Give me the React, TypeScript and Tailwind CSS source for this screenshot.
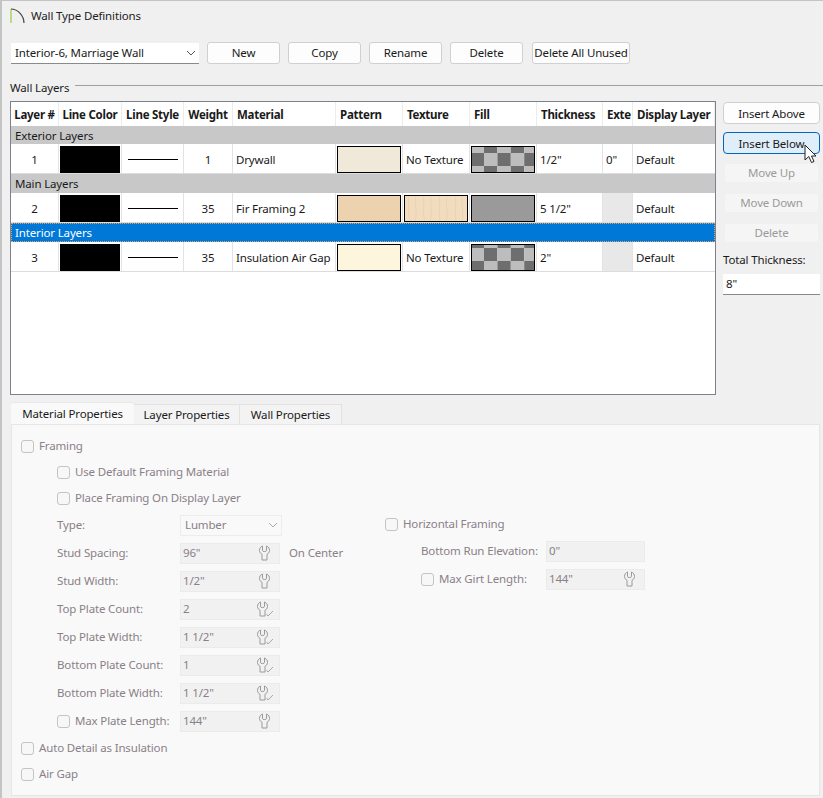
import type { ReactNode } from 'react';

const columns = [
  { name: 'Layer #', cls: 'justify-center' },
  { name: 'Line Color', cls: 'justify-center' },
  { name: 'Line Style', cls: 'justify-center' },
  { name: 'Weight', cls: 'justify-center' },
  { name: 'Material', cls: 'pl-1' },
  { name: 'Pattern', cls: 'pl-1' },
  { name: 'Texture', cls: 'pl-1' },
  { name: 'Fill', cls: 'pl-1' },
  { name: 'Thickness', cls: 'pl-1' },
  { name: 'Exte', cls: 'pl-1' },
  { name: 'Display Layer', cls: 'pl-1' },
];

const gridCols = 'grid grid-cols-[48px_63px_62px_49px_103px_67px_67px_67px_66px_30px_82px]';

function Checker({ top = -7, flip = false }: { top?: number; flip?: boolean }) {
  const cells = [];
  for (let row = 0; row < 4; row++) {
    for (let col = 0; col < 5; col++) {
      const light = (row + col) % 2 === (flip ? 1 : 0);
      cells.push(
        <rect key={`${row}-${col}`} x={col * 13.4 - 1.4} y={row * 13 + top} width={13.4} height={13} fill={light ? '#bdbdbd' : '#6e6e6e'} />,
      );
    }
  }
  return (
    <svg width="62" height="25" className="block">
      {cells}
    </svg>
  );
}

function WoodTexture() {
  return (
    <svg width="62" height="25" className="block">
      <rect width="62" height="25" fill="#f2dcc0" />
      <path d="M3 0C5 8 2 16 5 25M11 0C9 9 13 17 10 25M18 0C20 7 17 18 20 25M26 0C25 8 28 16 25 25M34 0C36 9 33 15 35 25M42 0C40 8 44 18 41 25M50 0C52 7 49 17 51 25M57 0C56 9 59 16 57 25" stroke="#ecd2b0" strokeWidth="1" fill="none" />
    </svg>
  );
}

function Swatch({ color, children }: { color?: string; children?: ReactNode }) {
  return (
    <div
      className="m-auto h-[27px] w-[64px] overflow-hidden border border-black"
      style={color ? { backgroundColor: color } : undefined}
    >
      {children}
    </div>
  );
}

function Cell({ children, cls = '' }: { children?: ReactNode; cls?: string }) {
  return <div className={`flex h-[29px] items-center border-r border-[#e3e3e3] pt-[2px] whitespace-nowrap ${cls}`}>{children}</div>;
}

function LayerRow(props: {
  num: string;
  weight: string;
  material: string;
  pattern: string;
  texture: ReactNode;
  fill: ReactNode;
  thickness: string;
  exterior?: string;
}) {
  return (
    <div className={`${gridCols} border-b border-[#dcdcdc] bg-white`}>
      <Cell cls="justify-center">{props.num}</Cell>
      <Cell>
        <div className="m-auto h-[27px] w-[60px] bg-black" />
      </Cell>
      <Cell cls="justify-center">
        <div className="h-px w-[50px] bg-black" />
      </Cell>
      <Cell cls="justify-center">{props.weight}</Cell>
      <Cell cls="pl-[3px]">{props.material}</Cell>
      <Cell>
        <Swatch color={props.pattern} />
      </Cell>
      <Cell>{props.texture}</Cell>
      <Cell>{props.fill}</Cell>
      <Cell cls="pl-[3px]">{props.thickness}</Cell>
      <Cell cls={props.exterior ? 'pl-[3px]' : 'bg-[#e8e8e8]'}>{props.exterior}</Cell>
      <div className="flex h-[29px] items-center pt-[2px] pl-[3px]">Default</div>
    </div>
  );
}

function GroupRow({ label, selected, short }: { label: string; selected?: boolean; short?: boolean }) {
  if (selected) {
    return (
      <div className="h-[19px] border border-dotted border-[#e8a060] bg-[#0078d7] pl-[3px] leading-[17px] text-white">
        {label}
      </div>
    );
  }
  return <div className={`bg-[#c8c8c8] pt-px pl-1 ${short ? 'h-[18px] leading-[17px]' : 'h-[19px] leading-[18px]'}`}>{label}</div>;
}

function TopButton({ label, width }: { label: string; width: string }) {
  return (
    <button className={`h-[22px] rounded-[3px] border border-[#d0d0d0] bg-[#fdfdfd] whitespace-nowrap ${width}`}>
      {label}
    </button>
  );
}

function SideButton({ label, state }: { label: string; state?: 'hover' | 'off' }) {
  if (state === 'off') {
    return (
      <button className="mx-px h-5 rounded-[3px] border border-[#f0f0f0] bg-[#f5f5f5] text-[#9a9a9a]">{label}</button>
    );
  }
  const look = state === 'hover' ? 'border-[#0067c0] bg-[#e0eef9]' : 'border-[#d0d0d0] bg-[#fdfdfd]';
  return <button className={`h-[22px] rounded-[4px] border pt-[2px] ${look}`}>{label}</button>;
}

function Check() {
  return <span className="inline-block size-[13px] shrink-0 rounded-[3px] border border-[#c4c4c4] bg-[#f7f7f7]" />;
}

function CheckLabel({ label, cls = '' }: { label: string; cls?: string }) {
  return (
    <div className={`flex h-[26px] items-center gap-[5px] ${cls}`}>
      <Check />
      <span>{label}</span>
    </div>
  );
}

function Wrench({ ticked }: { ticked?: boolean }) {
  return (
    <svg width="19" height="16" viewBox="0 0 19 16" fill="none" stroke="#9a9a9a" strokeWidth="1">
      <path
        d="M4.5 1C2.5 1.8 1.5 3.5 1.5 5.5C1.5 7.5 3 8.8 4 9.3V15H9V9.3C10 8.8 11.5 7.5 11.5 5.5C11.5 3.5 10.5 1.8 8.5 1V5.5Q8.5 6.5 6.5 6.5Q4.5 6.5 4.5 5.5Z"
        transform={ticked ? 'translate(1 0)' : 'translate(3 0)'}
      />
      {ticked && <path d="M11.5 13L13 15L18 10" stroke="#a8a8a8" />}
    </svg>
  );
}

function NumField({ value, icon, width = 'w-[100px]' }: { value: string; icon?: 'plain' | 'ticked'; width?: string }) {
  return (
    <div className={`flex h-[21px] items-center justify-between border border-[#ebebeb] bg-[#f1f1f1] pr-[5px] pl-[2px] ${width}`}>
      <span>{value}</span>
      {icon && <Wrench ticked={icon === 'ticked'} />}
    </div>
  );
}

function FieldRow({ label, children, check }: { label: string; children: ReactNode; check?: boolean }) {
  return (
    <div className="flex h-7 items-center pl-9">
      <div className="flex w-[123px] items-center gap-[5px]">
        {check && <Check />}
        <span>{label}</span>
      </div>
      {children}
    </div>
  );
}

export default function App() {
  return (
    <div className="h-[798px] w-[823px] overflow-hidden border-t border-l-2 border-[#c4c4c4] bg-[#f0f0f0] font-['Noto_Sans',sans-serif] text-[11.5px] leading-4 tracking-[-0.15px] text-[#1a1a1a]">
      <div className="flex h-[30px] items-center gap-[6px] pl-2 text-[#222]">
        <svg width="15" height="16" viewBox="0 0 15 16" fill="none">
          <path d="M1 1V15" stroke="#9ccc3c" strokeWidth="1.2" />
          <path d="M1 1C8 1 14 8 14 15" stroke="#444" strokeWidth="1.2" />
        </svg>
        <span>Wall Type Definitions</span>
      </div>

      <div className="mt-[11px] flex items-center pl-[9px]">
        <div className="flex h-[21px] w-[188px] items-center justify-between border-b border-[#8a8a8a] bg-white pr-[3px] pl-1">
          <span>Interior-6, Marriage Wall</span>
          <svg width="10" height="10" viewBox="0 0 10 10" fill="none" stroke="#555">
            <path d="M1 3L5 7L9 3" />
          </svg>
        </div>
        <div className="ml-2 flex gap-2">
          <TopButton label="New" width="w-[73px]" />
          <TopButton label="Copy" width="w-[73px]" />
          <TopButton label="Rename" width="w-[73px]" />
          <TopButton label="Delete" width="w-[73px]" />
        </div>
        <div className="ml-[9px]">
          <TopButton label="Delete All Unused" width="w-[98px]" />
        </div>
      </div>

      <div className="mt-[15px] flex items-center pl-[8px]">
        <span className="pt-px pr-[6px]">Wall Layers</span>
        <div className="mb-[5px] h-px flex-1 bg-[#a0a0a0]" />
      </div>

      <div className="mt-[5px] flex pl-[8px]">
        <div className="h-[294px] w-[706px] overflow-hidden border border-[#80808c] bg-white">
          <div className={`${gridCols} h-6 font-bold tracking-[-0.25px]`}>
            {columns.map((c) => (
              <div key={c.name} className={`flex items-center overflow-hidden border-r border-[#ececec] pt-[2px] whitespace-nowrap ${c.cls}`}>
                {c.name}
              </div>
            ))}
          </div>
          <GroupRow label="Exterior Layers" short />
          <LayerRow
            num="1"
            weight="1"
            material="Drywall"
            pattern="#f0e9da"
            texture={<span className="pl-[3px]">No Texture</span>}
            fill={
              <Swatch>
                <Checker />
              </Swatch>
            }
            thickness={'1/2"'}
            exterior={'0"'}
          />
          <GroupRow label="Main Layers" />
          <LayerRow
            num="2"
            weight="35"
            material="Fir Framing 2"
            pattern="#edd2b0"
            texture={
              <Swatch>
                <WoodTexture />
              </Swatch>
            }
            fill={<Swatch color="#9a9a9a" />}
            thickness={'5 1/2"'}
          />
          <GroupRow label="Interior Layers" selected />
          <LayerRow
            num="3"
            weight="35"
            material="Insulation Air Gap"
            pattern="#fdf5dc"
            texture={<span className="pl-[3px]">No Texture</span>}
            fill={
              <Swatch>
                <Checker top={-10} flip />
              </Swatch>
            }
            thickness={'2"'}
          />
        </div>

        <div className="relative ml-[7px] flex w-[97px] flex-col pt-px">
          <SideButton label="Insert Above" />
          <div className="mt-2 flex flex-col">
            <SideButton label="Insert Below" state="hover" />
          </div>
          <div className="mt-[9px] flex flex-col gap-[10px]">
            <SideButton label="Move Up" state="off" />
            <SideButton label="Move Down" state="off" />
            <SideButton label="Delete" state="off" />
          </div>
          <div className="mt-[9px]">Total Thickness:</div>
          <div className="mt-[6px] flex h-[21px] items-center border-b border-[#8a8a8a] bg-white pl-[3px]">8"</div>
          <svg width="14" height="20" viewBox="0 0 14 20" className="absolute top-[43px] left-[81px]">
            <path d="M1 1V16L4.8 12.5L7.5 18.5L10 17.5L7.5 12H12Z" fill="#fff" stroke="#222" strokeWidth="1" />
          </svg>
        </div>
      </div>

      <div className="mt-[7px] ml-[9px] flex h-[22px] items-end">
        <div className="flex h-[22px] w-[123px] items-center justify-center rounded-t-[3px] border-t border-[#e8e8e8] bg-[#f9f9f9]">Material Properties</div>
        <div className="flex h-[20px] w-[106px] items-center justify-center border-t border-r border-[#e2e2e2] bg-[#f3f3f3]">Layer Properties</div>
        <div className="flex h-[20px] w-[102px] items-center justify-center border-t border-r border-[#e2e2e2] bg-[#f3f3f3]">Wall Properties</div>
      </div>

      <div className="ml-[9px] h-[372px] w-[809px] border border-[#e6e6e6] bg-[#f9f9f9] pt-2 pl-[9px] text-[#8a8088]">
        <CheckLabel label="Framing" />
        <CheckLabel label="Use Default Framing Material" cls="pl-9" />
        <CheckLabel label="Place Framing On Display Layer" cls="pl-9" />

        <div className="flex">
          <div className="w-[364px]">
            <FieldRow label="Type:">
              <div className="flex h-[21px] w-[102px] items-center justify-between border border-[#ececec] bg-[#f9f9f9] pr-[3px] pl-1">
                <span>Lumber</span>
                <svg width="10" height="10" viewBox="0 0 10 10" fill="none" stroke="#aaa">
                  <path d="M1 3L5 7L9 3" />
                </svg>
              </div>
            </FieldRow>
            <FieldRow label="Stud Spacing:">
              <NumField value={'96"'} icon="plain" />
              <span className="ml-[9px]">On Center</span>
            </FieldRow>
            <FieldRow label="Stud Width:">
              <NumField value={'1/2"'} icon="plain" />
            </FieldRow>
            <FieldRow label="Top Plate Count:">
              <NumField value="2" icon="ticked" />
            </FieldRow>
            <FieldRow label="Top Plate Width:">
              <NumField value={'1 1/2"'} icon="ticked" />
            </FieldRow>
            <FieldRow label="Bottom Plate Count:">
              <NumField value="1" icon="ticked" />
            </FieldRow>
            <FieldRow label="Bottom Plate Width:">
              <NumField value={'1 1/2"'} icon="ticked" />
            </FieldRow>
            <FieldRow label="Max Plate Length:" check>
              <NumField value={'144"'} icon="plain" />
            </FieldRow>
          </div>
          <div>
            <CheckLabel label="Horizontal Framing" />
            <div className="flex h-7 items-center pl-9">
              <span className="w-[125px]">Bottom Run Elevation:</span>
              <NumField value={'0"'} width="w-[99px]" />
            </div>
            <div className="flex h-7 items-center pl-9">
              <div className="flex w-[125px] items-center gap-[5px]">
                <Check />
                <span>Max Girt Length:</span>
              </div>
              <NumField value={'144"'} icon="plain" width="w-[99px]" />
            </div>
          </div>
        </div>

        <CheckLabel label="Auto Detail as Insulation" />
        <CheckLabel label="Air Gap" />
      </div>
    </div>
  );
}
